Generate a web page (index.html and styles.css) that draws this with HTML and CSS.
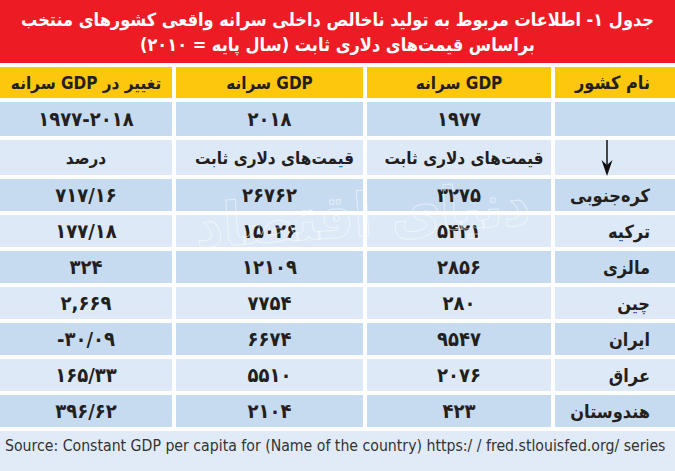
FILE: index.html
```html
<!DOCTYPE html>
<html lang="fa" dir="rtl">
<head>
<meta charset="utf-8">
<link rel="stylesheet" href="styles.css">
</head>
<body>
<div class="page">
  <div class="title">
    <div>جدول ۱- اطلاعات مربوط به تولید ناخالص داخلی سرانه واقعی کشورهای منتخب</div>
    <div>براساس قیمت‌های دلاری ثابت (سال پایه = ۲۰۱۰)</div>
  </div>
  <div class="table">
    <div class="cell head name">نام کشور</div>
    <div class="cell head">GDP سرانه</div>
    <div class="cell head">GDP سرانه</div>
    <div class="cell head">تغییر در GDP سرانه</div>

    <div class="cell dark tall"></div>
    <div class="cell dark tall num">۱۹۷۷</div>
    <div class="cell dark tall num">۲۰۱۸</div>
    <div class="cell dark tall num">۱۹۷۷-۲۰۱۸</div>

    <div class="cell light tall arrow-cell"><svg width="14" height="37" viewBox="0 0 14 37"><line x1="7" y1="0" x2="7" y2="28" stroke="#111" stroke-width="1.5"/><path d="M1.5 20 L7 36 L12.5 20 L7 25 Z" fill="#111"/></svg></div>
    <div class="cell light tall sub">قیمت‌های دلاری ثابت</div>
    <div class="cell light tall sub">قیمت‌های دلاری ثابت</div>
    <div class="cell light tall">درصد</div>

    <div class="cell dark name">کره‌جنوبی</div>
    <div class="cell dark num">۳۲۷۵</div>
    <div class="cell dark num">۲۶۷۶۲</div>
    <div class="cell dark num">۷۱۷/۱۶</div>

    <div class="cell light name">ترکیه</div>
    <div class="cell light num">۵۴۲۱</div>
    <div class="cell light num">۱۵۰۲۶</div>
    <div class="cell light num">۱۷۷/۱۸</div>

    <div class="cell dark name">مالزی</div>
    <div class="cell dark num">۲۸۵۶</div>
    <div class="cell dark num">۱۲۱۰۹</div>
    <div class="cell dark num">۳۲۴</div>

    <div class="cell light name">چین</div>
    <div class="cell light num">۲۸۰</div>
    <div class="cell light num">۷۷۵۴</div>
    <div class="cell light num">۲,۶۶۹</div>

    <div class="cell dark name">ایران</div>
    <div class="cell dark num">۹۵۴۷</div>
    <div class="cell dark num">۶۶۷۴</div>
    <div class="cell dark num">-۳۰/۰۹</div>

    <div class="cell light name">عراق</div>
    <div class="cell light num">۲۰۷۶</div>
    <div class="cell light num">۵۵۱۰</div>
    <div class="cell light num">۱۶۵/۳۳</div>

    <div class="cell dark name">هندوستان</div>
    <div class="cell dark num">۴۲۳</div>
    <div class="cell dark num">۲۱۰۴</div>
    <div class="cell dark num">۳۹۶/۶۲</div>
  </div>
  <div class="footer" dir="ltr">Source: Constant GDP per capita for (Name of the country) https:/ / fred.stlouisfed.org/ series</div>
  <div class="watermark">دنیای اقتصاد</div>
</div>
</body>
</html>
```
FILE: styles.css
```css
html, body {
  margin: 0;
  padding: 0;
  background: #ffffff;
}
.page {
  position: relative;
  width: 675px;
  height: 471px;
  overflow: hidden;
  display: flex;
  flex-direction: column;
  gap: 4px;
  font-family: "DejaVu Sans Condensed", "DejaVu Sans", sans-serif;
}
.title {
  height: 63px;
  background: #ed1c24;
  color: #ffffff;
  font-weight: bold;
  font-size: 18px;
  line-height: 25px;
  text-align: center;
  padding-top: 7px;
  box-sizing: border-box;
  white-space: nowrap;
}
.table {
  display: grid;
  grid-template-columns: 120px 184px 187px 172px;
  grid-template-rows: 31px 34px 35px repeat(7, 32px);
  gap: 4px;
}
.cell {
  display: flex;
  align-items: center;
  justify-content: center;
  font-weight: bold;
  font-size: 17px;
  color: #231f20;
}
.cell.name {
  justify-content: flex-start;
  padding-right: 25px;
  font-size: 18px;
}
.cell.sub {
  padding-left: 10px;
}
.head {
  background: #fcc70c;
}
.dark {
  background: #c6dbf0;
}
.light {
  background: #dde9f6;
}
.num {
  direction: ltr;
  font-size: 20px;
}
.arrow-cell {
  align-items: flex-start;
  padding-right: 16px;
}
.footer {
  flex: 1;
  background: #e0ebf7;
  font-family: "DejaVu Sans Condensed", "Liberation Sans", sans-serif;
  font-size: 15.7px;
  color: #333333;
  padding: 5px 0 0 5px;
  white-space: nowrap;
}
.watermark {
  position: absolute;
  left: 195px;
  top: 180px;
  font-size: 60px;
  font-weight: bold;
  color: transparent;
  -webkit-text-stroke: 1px rgba(255, 255, 255, 0.5);
  transform: rotate(-4deg);
  pointer-events: none;
}
```
